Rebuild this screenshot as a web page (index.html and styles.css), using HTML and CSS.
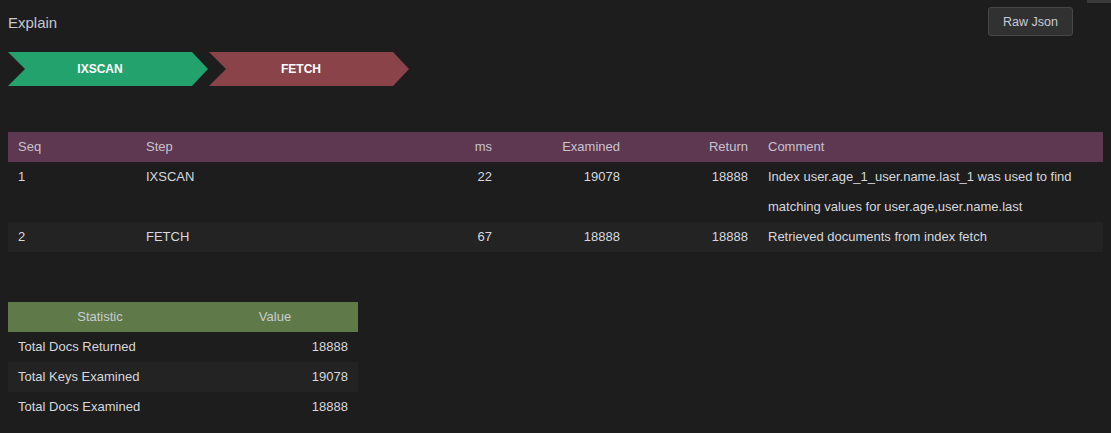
FILE: index.html
```html
<!DOCTYPE html>
<html>
<head>
<meta charset="utf-8">
<link rel="stylesheet" href="styles.css">
</head>
<body>
<div class="topbar"></div>
<div class="page">
  <div class="header">
    <h1 class="title">Explain</h1>
    <button class="raw-btn">Raw Json</button>
  </div>

  <div class="stages">
    <div class="stage stage-ixscan"><span>IXSCAN</span></div>
    <div class="stage stage-fetch"><span>FETCH</span></div>
  </div>

  <table class="steps">
    <colgroup>
      <col class="c-seq"><col class="c-step"><col class="c-ms"><col class="c-num"><col class="c-num"><col>
    </colgroup>
    <thead>
      <tr>
        <th>Seq</th><th>Step</th><th class="r">ms</th><th class="r">Examined</th><th class="r">Return</th><th>Comment</th>
      </tr>
    </thead>
    <tbody>
      <tr>
        <td>1</td><td>IXSCAN</td><td class="r">22</td><td class="r">19078</td><td class="r">18888</td>
        <td class="comment">Index user.age_1_user.name.last_1 was used to find<br>matching values for user.age,user.name.last</td>
      </tr>
      <tr class="alt">
        <td>2</td><td>FETCH</td><td class="r">67</td><td class="r">18888</td><td class="r">18888</td>
        <td class="comment">Retrieved documents from index fetch</td>
      </tr>
    </tbody>
  </table>

  <table class="stats">
    <colgroup><col class="c-stat"><col></colgroup>
    <thead>
      <tr><th>Statistic</th><th>Value</th></tr>
    </thead>
    <tbody>
      <tr><td>Total Docs Returned</td><td class="r">18888</td></tr>
      <tr class="alt"><td>Total Keys Examined</td><td class="r">19078</td></tr>
      <tr><td>Total Docs Examined</td><td class="r">18888</td></tr>
    </tbody>
  </table>
</div>
</body>
</html>
```

FILE: styles.css
```css
html, body {
  margin: 0;
  padding: 0;
  background: #1d1d1d;
  height: 100%;
}
body {
  font-family: "Liberation Sans", Arial, sans-serif;
  color: #d3d5db;
  font-size: 13px;
  position: relative;
  overflow: hidden;
}
.topbar {
  position: absolute;
  top: 0;
  right: 0;
  width: 24px;
  height: 3px;
  background: #3a3a3a;
}
.page {
  padding: 7px 8px 0 8px;
}
.header {
  display: flex;
  justify-content: space-between;
  align-items: flex-start;
  padding-right: 30px;
  height: 29px;
}
.title {
  margin: 0;
  padding-top: 7px;
  font-size: 15px;
  font-weight: normal;
  color: #c6c8ce;
  line-height: 18px;
}
.raw-btn {
  width: 85px;
  height: 29px;
  background: #313131;
  border: 1px solid #474747;
  border-radius: 3px;
  color: #c7cbd6;
  font-family: "Liberation Sans", Arial, sans-serif;
  font-size: 12.5px;
  padding: 0;
}
.stages {
  display: flex;
  margin-top: 16px;
  height: 34px;
  gap: 1px;
}
.stage {
  width: 200px;
  height: 34px;
  clip-path: polygon(0 0, 184px 0, 200px 17px, 184px 34px, 0 34px, 17px 17px);
  display: flex;
  align-items: center;
  justify-content: center;
  padding-right: 16px;
  box-sizing: border-box;
  color: #ffffff;
  font-weight: bold;
  font-size: 12px;
}
.stage-ixscan { background: #23a26e; }
.stage-fetch { background: #8b434a; }

table {
  border-collapse: collapse;
  table-layout: fixed;
}
th, td {
  height: 30px;
  padding: 0 10px;
  text-align: left;
  font-weight: normal;
  line-height: 30px;
  vertical-align: top;
  white-space: nowrap;
}
.r { text-align: right; }
.alt { background: #232323; }

.steps {
  width: 1095px;
  margin-top: 46px;
}
.steps thead tr { background: #5e3750; }
.steps th { color: #c6c3cf; }
.c-seq { width: 128px; }
.c-step { width: 238px; }
.c-ms { width: 128px; }
.c-num { width: 128px; }
.steps td { color: #d6d8de; }

.stats {
  width: 350px;
  margin-top: 50px;
}
.stats thead tr { background: #5f7a48; }
.stats th {
  text-align: center;
  color: #c9ccd2;
}
.c-stat { width: 184px; }
.stats td { color: #d6d8de; }
```
